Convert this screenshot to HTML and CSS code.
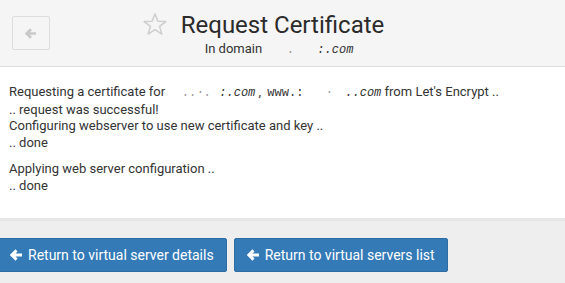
FILE: index.html
```html
<!DOCTYPE html>
<html lang="en">
<head>
    <meta charset="UTF-8">
    <title>Request Certificate</title>
    <link rel="stylesheet" href="styles.css">
</head>
<body>
    <div class="page-head">
        <div class="head-left">
            <a class="back-btn" href="#">
                <svg width="12" height="11" viewBox="0 0 14 13"><path d="M7 1.5 L2 6.5 L7 11.5 M2.5 6.5 H13" fill="none" stroke="#c9c9c9" stroke-width="3.2" stroke-linejoin="miter"/></svg>
            </a>
        </div>
        <div class="head-title">
            <h1>
                <svg class="star" width="26" height="25" viewBox="0 0 26 25"><path d="M13 1.8 L15.9 9.2 L23.8 9.5 L17.6 14.4 L19.8 22.1 L13 17.7 L6.2 22.1 L8.4 14.4 L2.2 9.5 L10.1 9.2 Z" fill="none" stroke="#cfcfcf" stroke-width="1.6" stroke-linejoin="round"/></svg>
                Request Certificate
            </h1>
            <div class="subtitle">In domain <span class="host host-sub"><span class="dot">.</span><span class="tld">:.com</span></span></div>
        </div>
        <div class="head-right"></div>
    </div>

    <div class="page-body">
        <p>Requesting a certificate for <span class="host host-a"><span class="dot">..·.</span><span class="tld">:.com</span></span> , <span class="host host-b"><span class="tld">www.:</span><span class="dot">·</span><span class="tld">..com</span></span> from Let's Encrypt ..<br>
        .. request was successful!<br>
        Configuring webserver to use new certificate and key ..<br>
        .. done</p>
        <p>Applying web server configuration ..<br>
        .. done</p>
    </div>

    <div class="page-foot">
        <a class="btn" href="#">
            <svg width="13" height="12" viewBox="0 0 14 13"><path d="M7 1.5 L2 6.5 L7 11.5 M2.5 6.5 H13" fill="none" stroke="#fff" stroke-width="3.2"/></svg>
            Return to virtual server details
        </a>
        <a class="btn" href="#">
            <svg width="13" height="12" viewBox="0 0 14 13"><path d="M7 1.5 L2 6.5 L7 11.5 M2.5 6.5 H13" fill="none" stroke="#fff" stroke-width="3.2"/></svg>
            Return to virtual servers list
        </a>
    </div>
</body>
</html>
```

FILE: styles.css
```css
:root {
    --text-color: #333;
    --head-bg: #f5f5f5;
    --line: #ddd;
    --primary: #337ab7;
}

html, body {
    margin: 0;
    height: 100%;
}

body {
    font-family: Roboto, "Liberation Sans", sans-serif;
    color: var(--text-color);
    background-color: #eee;
    font-size: 13px;
}

.page-head {
    display: grid;
    grid-template-columns: 1fr auto 1fr;
    height: 66px;
    background-color: var(--head-bg);
    border-bottom: 1px solid var(--line);
}

.head-left {
    padding: 16px 0 0 12px;
}

.back-btn {
    display: flex;
    align-items: center;
    justify-content: center;
    width: 36px;
    height: 32px;
    border: 1px solid #ddd;
    border-radius: 2px;
}

.head-title {
    padding-top: 9px;
    text-align: center;
}

.head-title h1 {
    position: relative;
    margin: 0;
    font-size: 24px;
    font-weight: 400;
    line-height: 32px;
    color: #2b2b2b;
}

.head-title .star {
    position: absolute;
    left: -39px;
    top: 3px;
}

.subtitle {
    font-size: 13px;
    line-height: 15px;
    margin-left: -7px;
}

.host {
    display: inline-flex;
    justify-content: space-between;
    white-space: nowrap;
    font-family: "Liberation Mono", monospace;
    font-style: italic;
    font-size: 12px;
    vertical-align: baseline;
}

.host .dot {
    color: #999;
    padding-left: 10px;
}

.host-sub {
    width: 80px;
    padding-left: 8px;
}

.host-sub .dot {
    padding-left: 14px;
}

.host-a {
    width: 87px;
}

.host-a .dot {
    padding-left: 14px;
}

.host-b {
    width: 114px;
    margin-left: 3px;
    font-style: normal;
}

.host-b .tld:last-child {
    font-style: italic;
}

.page-body {
    background-color: #fff;
    padding: 17px 9px 24px;
    line-height: 16.5px;
}

.page-body p {
    margin: 0 0 10px;
}

.page-body p:last-child {
    margin-bottom: 0;
}

.page-foot {
    display: flex;
    gap: 7px;
    margin-left: -3px;
    padding-top: 17px;
    border-top: 3px solid #e6e6e6;
    background-color: #eee;
}

.btn {
    display: inline-flex;
    align-items: center;
    gap: 5px;
    height: 34px;
    padding: 0 12px;
    box-sizing: border-box;
    background-color: var(--primary);
    border: 1px solid #2e6da4;
    border-radius: 2px;
    color: #fff;
    font-size: 14px;
    text-decoration: none;
}
```
